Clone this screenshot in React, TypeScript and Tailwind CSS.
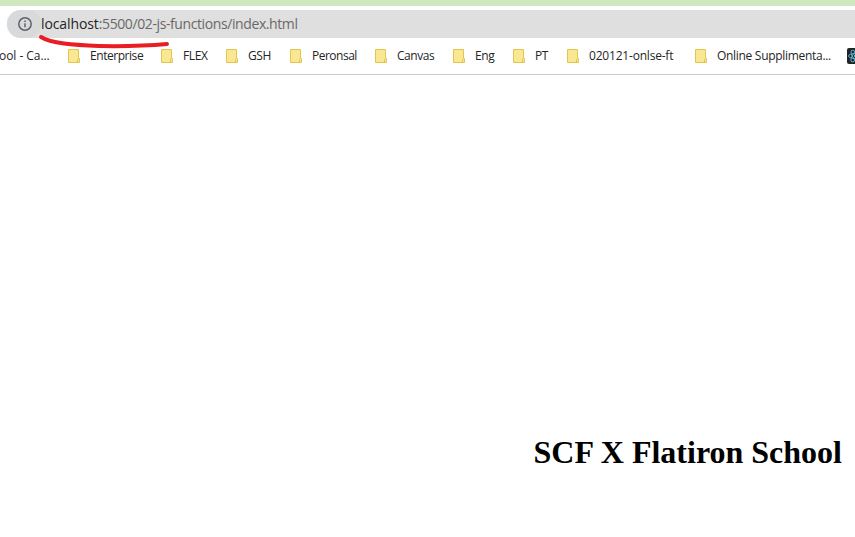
const bookmarks = [
  { name: "Enterprise", width: "w-[93px]", spacing: "tracking-[-0.45px]" },
  { name: "FLEX", width: "w-[65px]", spacing: "tracking-[-0.4px]" },
  { name: "GSH", width: "w-[64px]", spacing: "tracking-[-0.4px]" },
  { name: "Peronsal", width: "w-[85px]", spacing: "tracking-[-0.5px]" },
  { name: "Canvas", width: "w-[78px]", spacing: "tracking-[-0.45px]" },
  { name: "Eng", width: "w-[60px]", spacing: "tracking-[-0.4px]" },
  { name: "PT", width: "w-[54px]", spacing: "tracking-[-0.4px]" },
  { name: "020121-onlse-ft", width: "w-[128px]", spacing: "tracking-[-0.2px]" },
  { name: "Online Supplimenta...", width: "w-[152px]", spacing: "tracking-[-0.3px]" },
];

function FolderIcon() {
  return (
    <svg className="h-[14px] w-[12px] shrink-0" viewBox="0 0 12 14" fill="none">
      <path d="M.5.5h10v9h1v4H.5z" fill="#fae792" stroke="#e3c54f" />
      <path d="M9.5 13.5V10.5l1-1" stroke="#e3c54f" />
    </svg>
  );
}

function InfoIcon() {
  return (
    <svg className="h-[14px] w-[14px]" viewBox="0 0 14 14" fill="none">
      <circle cx="7" cy="7" r="6.2" stroke="#5f6368" strokeWidth="1.5" />
      <path d="M7 6.2v4.1M7 3.5v1.5" stroke="#5f6368" strokeWidth="1.5" />
    </svg>
  );
}

function ReactIcon() {
  return (
    <svg className="h-4 w-4 shrink-0" viewBox="0 0 16 16" fill="none">
      <rect width="16" height="16" rx="2" fill="#20232a" />
      <g stroke="#61bcd5" strokeWidth=".9">
        <ellipse cx="8" cy="8" rx="6.5" ry="2.5" />
        <ellipse cx="8" cy="8" rx="6.5" ry="2.5" transform="rotate(60 8 8)" />
        <ellipse cx="8" cy="8" rx="6.5" ry="2.5" transform="rotate(120 8 8)" />
      </g>
      <circle cx="8" cy="8" r="1.2" fill="#61bcd5" />
    </svg>
  );
}

export default function App() {
  return (
    <div className="relative flex h-[537px] w-[855px] flex-col overflow-hidden bg-white font-['Open_Sans',sans-serif]">
      <div className="h-[6px] shrink-0 bg-[#d0e8bf]" />
      <header className="flex h-[69px] shrink-0 flex-col border-b border-[#c9c9c9] pt-1">
        <div className="ml-[7px] flex h-7 items-center rounded-l-full bg-[#dfdfdf]">
          <div className="flex h-7 w-[34px] items-center rounded-full bg-[#d8d9da] pl-[11px]">
            <InfoIcon />
          </div>
          <span className="whitespace-nowrap text-[14px] leading-7 tracking-[-0.4px] text-[#696969]">
            <span className="tracking-[-0.1px] text-[#252525]">localhost</span>:5500/02-js-functions/index.html
          </span>
        </div>
        <nav className="flex h-9 items-center whitespace-nowrap text-[12px] text-[#252525]">
          <span className="-ml-px w-[69px] shrink-0 tracking-[-0.05px]">ool - Ca...</span>
          {bookmarks.map((b) => (
            <div key={b.name} className={`flex shrink-0 items-center gap-[10px] ${b.width}`}>
              <FolderIcon />
              <span className={b.spacing}>{b.name}</span>
            </div>
          ))}
          <ReactIcon />
        </nav>
      </header>
      <main className="flex grow justify-end pr-[13px] pt-[359px]">
        <h1 className="whitespace-nowrap font-['Liberation_Serif',serif] text-[32px] font-bold leading-[36px] text-black">
          SCF X Flatiron School
        </h1>
      </main>
      <svg className="absolute left-[36px] top-[30px] h-[20px] w-[140px]" viewBox="36 30 140 20" fill="none">
        <path d="M41 37C51 43.5 73 45 99 46C127 46.5 145 46 167 44" stroke="#e81e24" strokeWidth="4" strokeLinecap="round" />
      </svg>
    </div>
  );
}
